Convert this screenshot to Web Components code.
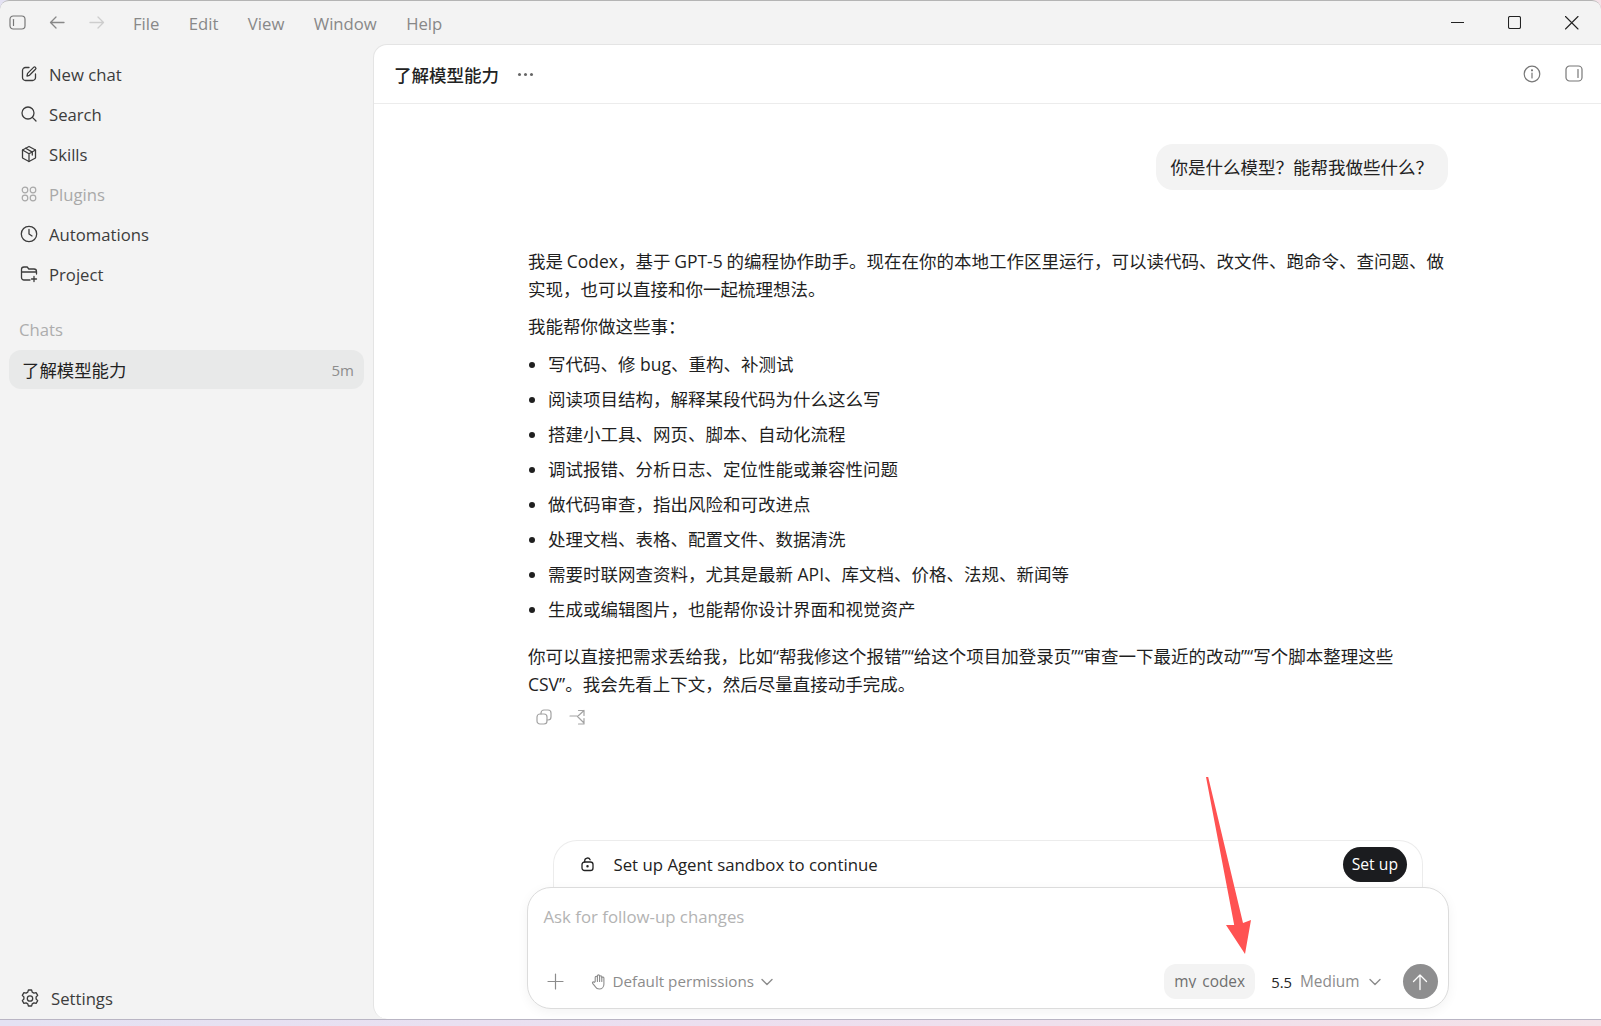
<!DOCTYPE html>
<html lang="zh-CN">
<head>
<meta charset="utf-8">
<title>Codex</title>
<style>
  html, body { margin: 0; height: 100%; overflow: hidden; }
  body {
    background: linear-gradient(90deg, #e4e2f3 0%, #ecdff0 45%, #f4e2e8 100%);
    font-family: "Open Sans", "Noto Sans CJK SC", sans-serif;
  }
</style>
</head>
<body>
<app-shell>
  <title-bar slot="top"></title-bar>
  <side-bar slot="side"></side-bar>
  <chat-panel slot="main"></chat-panel>
</app-shell>

<script>
const ICONS = {
  sidebar: '<rect x="1" y="1" width="15" height="13" rx="3.2"/><path d="M4.5 4.5v6"/>',
  back: '<path d="M15 7.5H1.5M7 2 1.5 7.5 7 13"/>',
  forward: '<path d="M1 7.5h13.5M9 2l5.5 5.5L9 13"/>',
  compose: '<path d="M9 2.5H5.5a3 3 0 0 0-3 3v7a3 3 0 0 0 3 3h7a3 3 0 0 0 3-3V9"/><path d="M7 11l.6-2.6 6-6a1.3 1.3 0 0 1 1.9 1.9l-6 6z"/>',
  search: '<circle cx="8" cy="8" r="6"/><path d="M12.4 12.4 16 16"/>',
  skills: '<path d="M9 1.5 15.5 5v8L9 16.5 2.5 13V5z"/><path d="M2.5 5 9 8.8 15.5 5M9 8.8v7.7M5.7 3.3l6.6 3.8v3"/>',
  plugins: '<circle cx="5" cy="5" r="2.8"/><circle cx="13" cy="5" r="2.8"/><circle cx="5" cy="13" r="2.8"/><circle cx="13" cy="13" r="2.8"/>',
  clock: '<circle cx="9" cy="9" r="7.7"/><path d="M9 4.5V9l3 2"/>',
  project: '<path d="M10 15H4a2.5 2.5 0 0 1-2.5-2.5v-8A2.5 2.5 0 0 1 4 2h3.2l1.6 2H14a2.5 2.5 0 0 1 2.5 2.5V9M1.5 7h15M14 11.5v5M11.5 14h5"/>',
  settings: '<path d="M7.4 1.5h3.2l.6 2.1 1.7 1 2.2-.5 1.6 2.8-1.6 1.6v2l1.6 1.6-1.6 2.8-2.2-.5-1.7 1-.6 2.1H7.4l-.6-2.1-1.7-1-2.2.5-1.6-2.8 1.6-1.6v-2L1.3 6.9l1.6-2.8 2.2.5 1.7-1z" transform="translate(0 -.5)"/><circle cx="9" cy="9.5" r="2.7"/>',
  info: '<circle cx="9" cy="9" r="7.8"/><path d="M9 8v5"/><circle cx="9" cy="5.3" r=".5"/>',
  panel: '<rect x="1" y="1" width="16" height="15" rx="3.6"/><path d="M13 4.5v8"/>',
  copy: '<rect x="1" y="5" width="10" height="10" rx="3"/><path d="M5 5V4a3 3 0 0 1 3-3h4a3 3 0 0 1 3 3v4a3 3 0 0 1-3 3h-1"/>',
  share: '<path d="M1 7h7M9.5 1.5H15v5M15 1.5 8.5 7.5l6 6M15 9.5V15H9.5"/>',
  lock: '<rect x="1" y="5" width="11" height="8.5" rx="2.6"/><path d="M3.7 5V3.8a2.8 2.8 0 0 1 5.4-1"/><circle cx="6.5" cy="9.2" r=".6"/>',
  plus: '<path d="M8.5 1v15M1 8.5h15"/>',
  hand: '<path d="M4.2 8.5V4.3a1.1 1.1 0 0 1 2.2 0V3a1.1 1.1 0 0 1 2.2 0v.8a1.1 1.1 0 0 1 2.2 0v1a1.1 1.1 0 0 1 2.1 0v6.4c0 2.7-2 4.8-4.6 4.8-1.9 0-3.1-.8-4-2.3L1.6 10.3c-.6-1.1.9-2 1.7-1z"/><path d="M6.4 4v4.5M8.6 3.5v5M10.8 4.5v4"/>',
  chevron: '<path d="M1 1.5 6 6.5 11 1.5"/>',
  up: '<path d="M9 16.5V2M2.5 8.5 9 2l6.5 6.5"/>',
  min: '<path d="M0 .5h13"/>',
  max: '<rect x=".5" y=".5" width="12" height="12" rx="1.5"/>',
  close: '<path d="M.5.5l12.5 12.5M13 .5.5 13"/>'
};

class UiIcon extends HTMLElement {
  connectedCallback() {
    const name = this.getAttribute('name');
    const w = this.getAttribute('w') || 18;
    const h = this.getAttribute('h') || w;
    const sw = this.getAttribute('sw') || 1.4;
    this.attachShadow({ mode: 'open' }).innerHTML = `
      <style>
        :host { display: inline-flex; flex: none; color: inherit; }
        svg { display: block; fill: none; stroke: currentColor; stroke-linecap: round; stroke-linejoin: round; }
      </style>
      <svg width="${w}" height="${h}" viewBox="0 0 ${w} ${h}" stroke-width="${sw}">${ICONS[name] || ''}</svg>`;
  }
}

class AppShell extends HTMLElement {
  constructor() {
    super();
    this.attachShadow({ mode: 'open' }).innerHTML = `
      <style>
        :host { display: block; height: 1026px; position: relative; }
        .window {
          height: 1020px; box-sizing: border-box;
          display: flex; flex-direction: column;
          background: #f3f3f3;
          border-top: 1px solid #b4b4b4;
          border-bottom: 1px solid #b9b5c4;
          border-radius: 9px 9px 0 0;
          overflow: hidden;
        }
        .body { flex: 1; display: flex; min-height: 0; }
        .arrow { position: absolute; left: 1200px; top: 770px; }
      </style>
      <div class="window">
        <slot name="top"></slot>
        <div class="body">
          <slot name="side"></slot>
          <slot name="main"></slot>
        </div>
      </div>
      <svg class="arrow" width="60" height="190" viewBox="1200 770 60 190">
        <polygon fill="#ff5252" points="1206,777 1208.2,777 1243,923 1251,920 1245,954 1226,925 1234.2,925"/>
      </svg>`;
  }
}

class TitleBar extends HTMLElement {
  constructor() {
    super();
    this.attachShadow({ mode: 'open' }).innerHTML = `
      <style>
        :host { display: flex; align-items: center; height: 43px; flex: none; color: #888; font-size: 16.7px; }
        .nav { display: flex; align-items: center; padding-left: 9px; }
        .bk { margin-left: 23px; }
        .fwd { color: #cdcdcd; margin-left: 24px; }
        nav { display: flex; gap: 29.4px; margin-left: 28px; padding-top: 2px; }
        .win { margin-left: auto; display: flex; align-items: center; color: #222; padding-right: 22px; gap: 44px; }
      </style>
      <div class="nav">
        <ui-icon name="sidebar" w="17" h="15" sw="1.2" style="color:#777"></ui-icon>
        <ui-icon class="bk" name="back" w="16" h="15" sw="1.3"></ui-icon>
        <ui-icon class="fwd" name="forward" w="16" h="15" sw="1.3"></ui-icon>
      </div>
      <nav><span>File</span><span>Edit</span><span>View</span><span>Window</span><span>Help</span></nav>
      <div class="win">
        <ui-icon name="min" w="13" h="1" sw="1.2"></ui-icon>
        <ui-icon name="max" w="13" h="13" sw="1.1"></ui-icon>
        <ui-icon name="close" w="14" h="14" sw="1.1"></ui-icon>
      </div>`;
  }
}

class NavItem extends HTMLElement {
  constructor() {
    super();
    this.attachShadow({ mode: 'open' }).innerHTML = `
      <style>
        :host { display: flex; align-items: center; height: 40px; padding-left: 20px; gap: 11px; color: #3c3c3c; font-size: 16.7px; }
        :host([muted]) { color: #a9a9a9; }
        .ic { width: 18px; display: flex; justify-content: center; }
      </style>
      <span class="ic"><slot name="icon"></slot></span>
      <slot></slot>`;
  }
}

class SideBar extends HTMLElement {
  constructor() {
    super();
    this.attachShadow({ mode: 'open' }).innerHTML = `
      <style>
        :host { display: flex; flex-direction: column; width: 373px; flex: none; box-sizing: border-box; padding: 10px 0 1px; }
        .label { color: #adadad; font-size: 16.7px; height: 20px; line-height: 20px; margin: 26px 0 10px 19px; }
        .row {
          display: flex; align-items: center; justify-content: space-between;
          height: 39px; margin: 0 9px 0 9px; padding: 0 10px 0 13px;
          background: #e8e9e9; border-radius: 12px; color: #222; font-size: 17.4px;
        }
        .age { color: #8d8d8d; font-size: 15px; }
      </style>
      <nav-item><ui-icon slot="icon" name="compose" sw="1.3"></ui-icon>New chat</nav-item>
      <nav-item><ui-icon slot="icon" name="search" sw="1.3"></ui-icon>Search</nav-item>
      <nav-item><ui-icon slot="icon" name="skills" sw="1.3"></ui-icon>Skills</nav-item>
      <nav-item muted><ui-icon slot="icon" name="plugins" sw="1.2"></ui-icon>Plugins</nav-item>
      <nav-item><ui-icon slot="icon" name="clock" sw="1.3"></ui-icon>Automations</nav-item>
      <nav-item><ui-icon slot="icon" name="project" sw="1.3"></ui-icon>Project</nav-item>
      <div class="label">Chats</div>
      <div class="row"><span>了解模型能力</span><span class="age">5m</span></div>
      <nav-item style="margin-top:auto;padding-left:21px;gap:12px"><ui-icon slot="icon" name="settings" sw="1.3"></ui-icon>Settings</nav-item>`;
  }
}

class UserBubble extends HTMLElement {
  constructor() {
    super();
    this.attachShadow({ mode: 'open' }).innerHTML = `
      <style>
        :host { display: block; width: fit-content; margin-left: auto; box-sizing: border-box; height: 46px; line-height: 46px; padding: 0 15px; background: #f3f3f3; border-radius: 17px; color: #222; font-size: 17.5px; }
      </style>
      <slot></slot>`;
  }
}

class AgentReply extends HTMLElement {
  constructor() {
    super();
    this.attachShadow({ mode: 'open' }).innerHTML = `
      <style>
        :host { display: block; margin-top: 57px; color: #1f1f1f; font-size: 17.5px; line-height: 28px; }
        p { margin: 0 0 9px; padding-left: 1px; }
        p.intro { word-spacing: -.8px; }
        ul { margin: 10px 0 19px; padding: 0 0 0 21px; display: flex; flex-direction: column; gap: 7px; }
        .tools { display: flex; gap: 17px; margin: 11px 0 0 9px; color: #a3a3a3; line-height: 0; }
      </style>
      <p class="intro">我是 Codex&#xFF0C;基于 GPT-5 的编程协作助手。现在在你的本地工作区里运行&#xFF0C;可以读代码、改文件、跑命令、查问题、做实现&#xFF0C;也可以直接和你一起梳理想法。</p>
      <p>我能帮你做这些事&#xFF1A;</p>
      <ul>
        <li>写代码、修 bug、重构、补测试</li>
        <li>阅读项目结构&#xFF0C;解释某段代码为什么这么写</li>
        <li>搭建小工具、网页、脚本、自动化流程</li>
        <li>调试报错、分析日志、定位性能或兼容性问题</li>
        <li>做代码审查&#xFF0C;指出风险和可改进点</li>
        <li>处理文档、表格、配置文件、数据清洗</li>
        <li>需要时联网查资料&#xFF0C;尤其是最新 API、库文档、价格、法规、新闻等</li>
        <li>生成或编辑图片&#xFF0C;也能帮你设计界面和视觉资产</li>
      </ul>
      <p style="margin:0">你可以直接把需求丢给我&#xFF0C;比如&#x201C;帮我修这个报错&#x201D;&#x201C;给这个项目加登录页&#x201D;&#x201C;审查一下最近的改动&#x201D;&#x201C;写个脚本整理这些 CSV&#x201D;。我会先看上下文&#xFF0C;然后尽量直接动手完成。</p>
      <div class="tools">
        <ui-icon name="copy" w="16" h="16" sw="1.2"></ui-icon>
        <ui-icon name="share" w="16" h="16" sw="1.2"></ui-icon>
      </div>`;
  }
}

class ChatComposer extends HTMLElement {
  constructor() {
    super();
    this.attachShadow({ mode: 'open' }).innerHTML = `
      <style>
        :host { display: block; width: 922px; margin: 0 auto 10px; flex: none; }
        .banner {
          height: 48px; box-sizing: border-box; margin: 0 26px -1px;
          display: flex; align-items: center; padding: 0 15px 0 27px;
          border: 1px solid #ececec; border-bottom: 0; border-radius: 24px 24px 0 0;
          color: #222; font-size: 16.8px;
        }
        .banner .txt { margin-left: 20px; }
        .setup { margin-left: auto; height: 35px; line-height: 34px; padding: 0 8.5px; border-radius: 18px; background: #1b1c1f; color: #fff; font-size: 15.7px; }
        .box {
          position: relative; height: 122px; box-sizing: border-box;
          background: #fff; border: 1px solid #dcdcdc; border-radius: 24px;
          box-shadow: 0 3px 12px rgba(0,0,0,.05);
          display: flex; flex-direction: column;
        }
        .ph { color: #b3b3b3; font-size: 16.8px; padding: 17px 0 0 16px; line-height: 24px; }
        .bar { margin-top: auto; display: flex; align-items: center; height: 35px; padding: 0 10px 9px 19px; color: #8c8c8c; font-size: 15.4px; }
        .perm { display: flex; align-items: center; margin-left: 27px; gap: 7px; font-size: 15.2px; }
        .perm span { margin-top: -2px; }
        .chip { margin-left: auto; width: 91px; height: 35px; border-radius: 12px; background: #f3f3f3; color: #6f6f6f; display: flex; justify-content: center; }
        .chip span { display: block; height: 20px; line-height: 28px; margin-top: 4px; overflow: hidden; word-spacing: 2px; }
        .ver { color: #222; margin-left: 16px; font-size: 14.8px; }
        .eff { margin-left: 8px; }
        .send { margin-left: 22px; width: 35px; height: 35px; border-radius: 50%; background: #8e8e8f; color: #fff; display: flex; align-items: center; justify-content: center; }
      </style>
      <div class="banner">
        <ui-icon name="lock" w="13" h="15" sw="1.3"></ui-icon>
        <span class="txt">Set up Agent sandbox to continue</span>
        <span class="setup">Set up</span>
      </div>
      <div class="box">
        <div class="ph">Ask for follow-up changes</div>
        <div class="bar">
          <ui-icon name="plus" w="17" h="17" sw="1.2"></ui-icon>
          <span class="perm">
            <ui-icon name="hand" w="15" h="17" sw="1.1"></ui-icon>
            <span>Default permissions</span>
            <ui-icon name="chevron" w="12" h="8" sw="1.4"></ui-icon>
          </span>
          <span class="chip"><span>my codex</span></span>
          <span class="ver">5.5</span>
          <span class="eff">Medium</span>
          <ui-icon name="chevron" w="12" h="8" sw="1.4" style="margin-left:9px"></ui-icon>
          <span class="send"><ui-icon name="up" w="18" h="18" sw="1.3"></ui-icon></span>
        </div>
      </div>`;
  }
}

class ChatPanel extends HTMLElement {
  constructor() {
    super();
    this.attachShadow({ mode: 'open' }).innerHTML = `
      <style>
        :host {
          flex: 1; min-width: 0; display: flex; flex-direction: column; box-sizing: border-box;
          background: #fff; border: 1px solid #e4e4e4; border-width: 1px 0 0 1px; border-radius: 14px 0 0 14px;
        }
        header {
          height: 59px; flex: none; box-sizing: border-box; display: flex; align-items: center;
          padding: 0 18px 0 20px; border-bottom: 1px solid #ececec; color: #222; font-size: 17.5px;
        }
        h1 { all: unset; font-weight: 500; }
        .dots { display: flex; gap: 3px; margin-left: 19px; }
        .dots i { width: 3px; height: 3px; border-radius: 50%; background: #666; }
        .right { margin-left: auto; display: flex; gap: 24px; color: #777; }
        .thread { flex: 1; min-height: 0; width: 921px; margin: 0 auto; padding-top: 40px; box-sizing: border-box; }
      </style>
      <header>
        <h1>了解模型能力</h1>
        <span class="dots"><i></i><i></i><i></i></span>
        <span class="right">
          <ui-icon name="info" w="18" h="18" sw="1.2"></ui-icon>
          <ui-icon name="panel" w="18" h="17" sw="1.2"></ui-icon>
        </span>
      </header>
      <div class="thread">
        <user-bubble>你是什么模型&#xFF1F;能帮我做些什么&#xFF1F;</user-bubble>
        <agent-reply></agent-reply>
      </div>
      <chat-composer></chat-composer>`;
  }
}

customElements.define('ui-icon', UiIcon);
customElements.define('app-shell', AppShell);
customElements.define('title-bar', TitleBar);
customElements.define('nav-item', NavItem);
customElements.define('side-bar', SideBar);
customElements.define('user-bubble', UserBubble);
customElements.define('agent-reply', AgentReply);
customElements.define('chat-composer', ChatComposer);
customElements.define('chat-panel', ChatPanel);
</script>
</body>
</html>
